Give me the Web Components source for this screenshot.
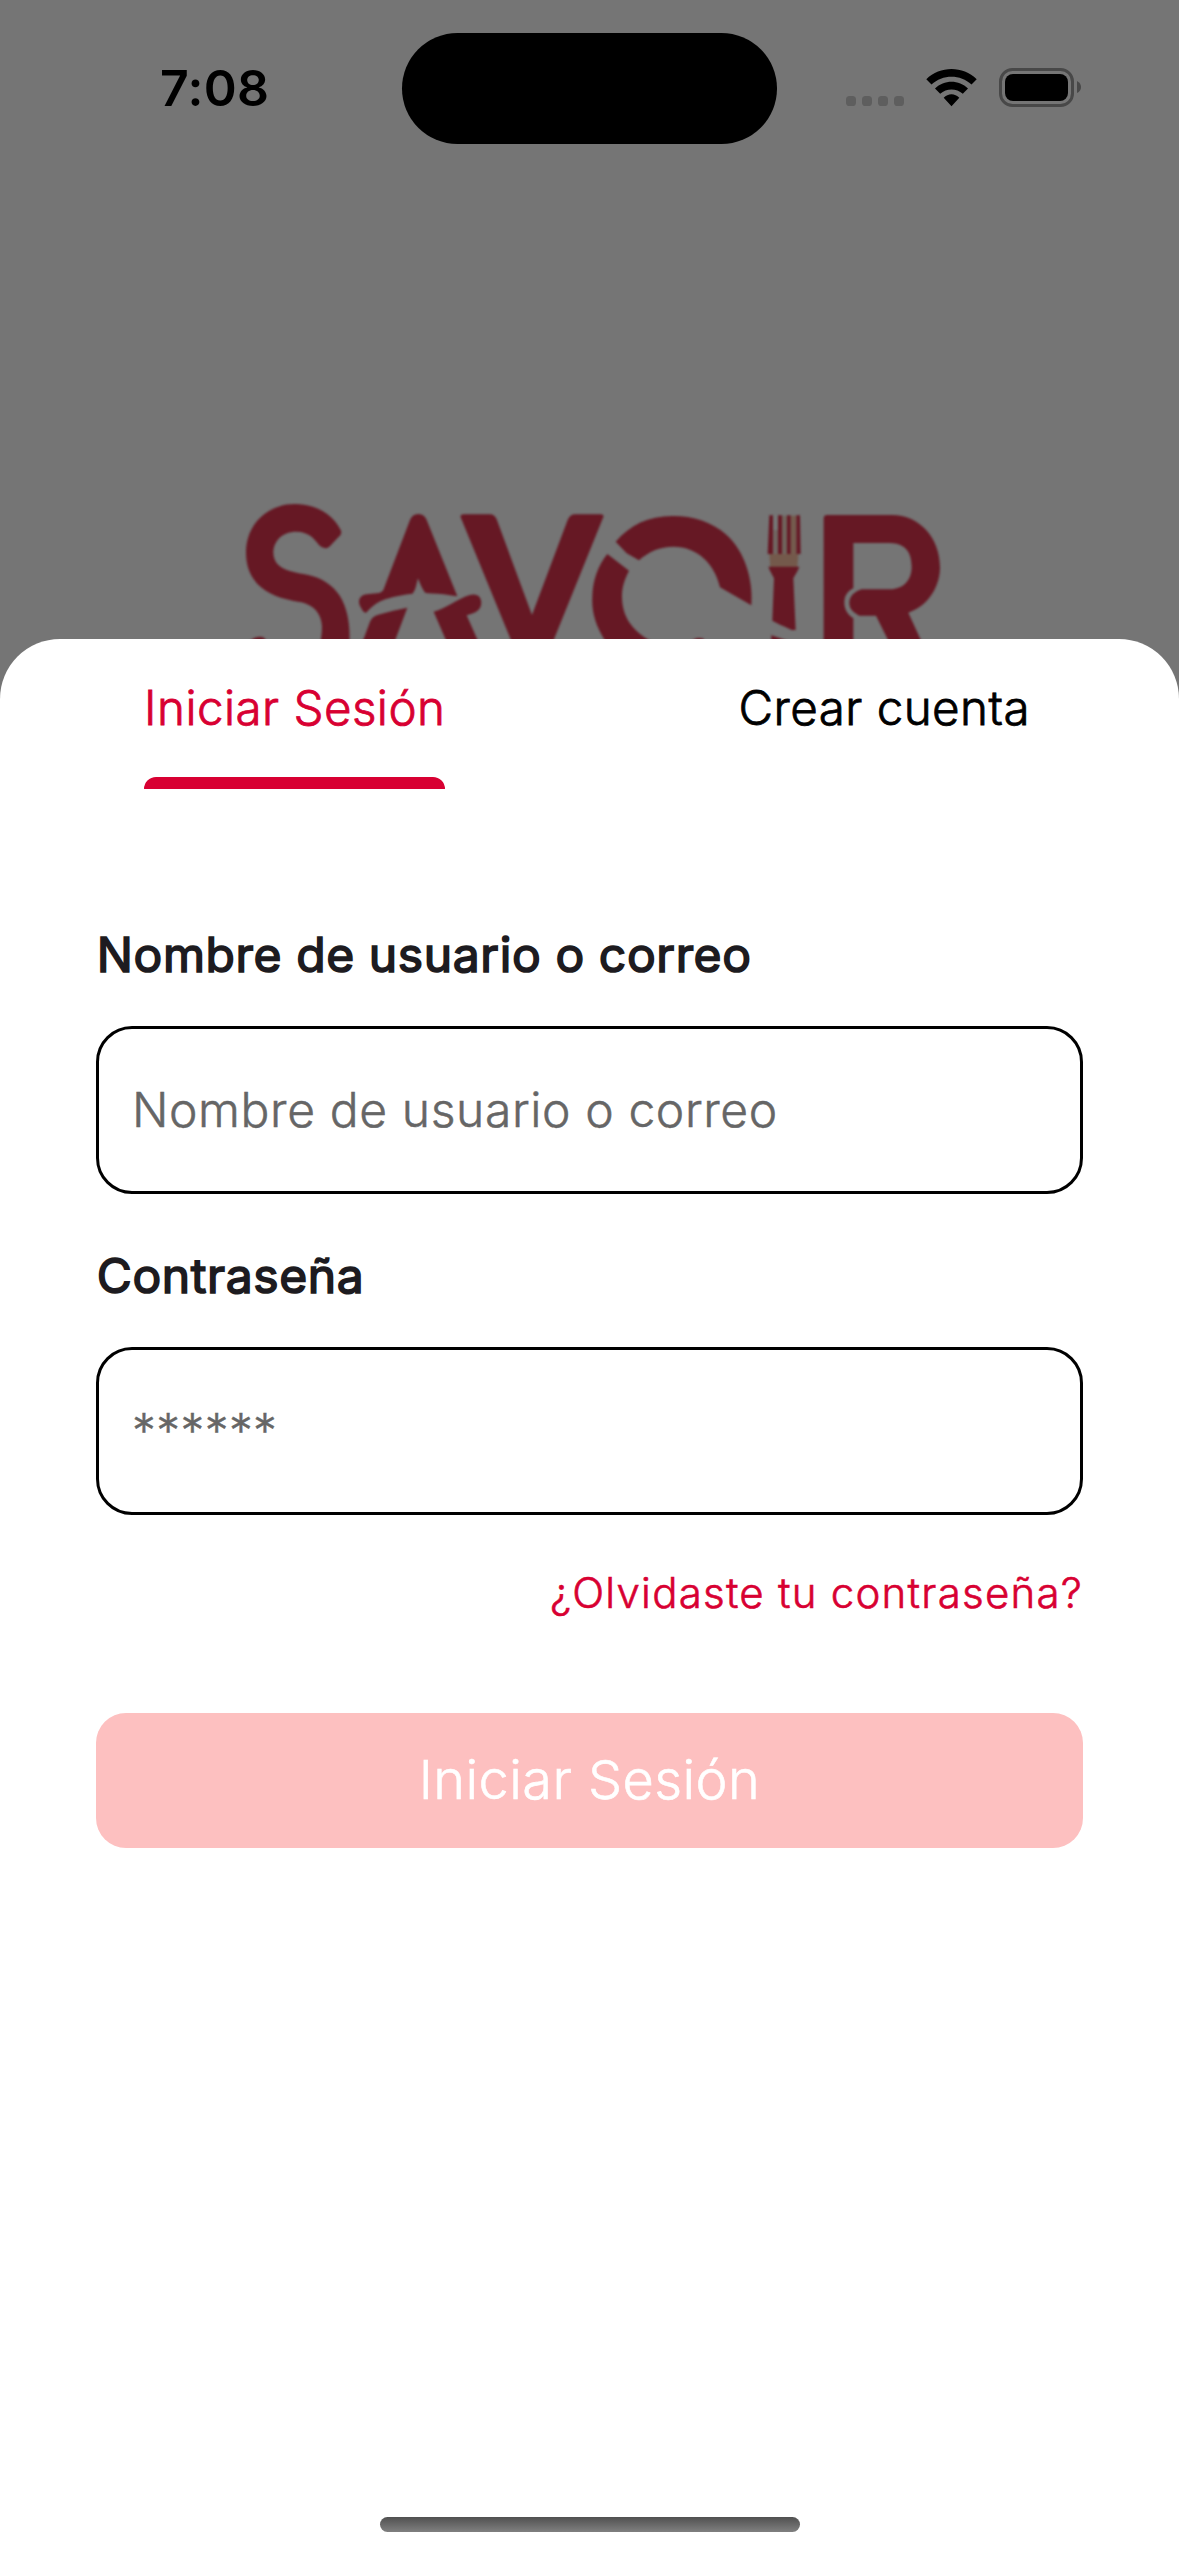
<!DOCTYPE html>
<html lang="es">
<head>
<meta charset="utf-8">
<title>Savoir</title>
<style>
html,body{margin:0;padding:0;background:#fff}
body{font-family:Inter,"Liberation Sans",sans-serif;width:1179px;height:2556px;overflow:hidden}
</style>
</head>
<body>
<savoir-screen></savoir-screen>

<script>
const define = (name, html) => customElements.define(name, class extends HTMLElement {
  constructor() {
    super();
    const t = document.createElement('template');
    t.innerHTML = html;
    this.attachShadow({ mode: 'open' }).append(t.content.cloneNode(true));
  }
});

define('status-bar', `
<style>
:host{display:flex;height:178px;align-items:flex-start;color:#000}
.time{flex:0 0 402px;padding-left:160px;box-sizing:border-box;font-size:50px;font-weight:600;line-height:60px;padding-top:58px;letter-spacing:.3px}
.island{flex:0 0 375px;height:111px;margin-top:33.4px;margin-right:1px;border-radius:56px;background:#000}
.icons{display:flex;padding-left:68px;padding-top:68px}
svg{display:block}
</style>
<div class="time">7:08</div>
<div class="island"></div>
<div class="icons">
<svg width="240" height="40" viewBox="846 68 240 40">
<g fill="#5e5e5e"><rect x="846" y="96" width="10" height="10" rx="3.6"/><rect x="862" y="96" width="10" height="10" rx="3.6"/><rect x="878" y="96" width="10" height="10" rx="3.6"/><rect x="894" y="96" width="10" height="10" rx="3.6"/></g>
<path d="M926.3 79.3C940 65.6 963 65.6 976.7 79.3L971.5 84.5C960.5 74 942.500 74 931.500 84.500ZM935 88.600C944 79.600 959 79.600 968 88.600L962.800 93.800C956.500 88 946.500 88 940.200 93.800ZM943.700 97.800C948 93 955 93 959.300 97.800L951.500 106.200Z"/>
<rect x="1000.500" y="69.500" width="72" height="36" rx="12" fill="none" stroke="#484848" stroke-width="3"/>
<rect x="1005" y="74" width="63" height="27" rx="8"/>
<path d="M1077 81Q1081 83 1081 87Q1081 91 1077 93Z" fill="#484848"/>
</svg>
</div>`);

define('savoir-logo', `
<style>:host{display:block;width:740px;height:159px}svg{display:block;filter:blur(.8px)}</style>
<svg width="740" height="175" viewBox="230 480 740 175" fill="#661824">
<g transform="translate(220 480) scale(.33333)">
<path d="M362 150C340 105 290 72 225 72C140 72 78 135 78 218C78 300 130 340 200 358C225 365 245 366 258 371C290 382 305 410 306 440C306 455 304 470 301 490L388 490C392 430 380 370 350 335C325 305 290 288 250 282C195 272 160 260 160 215C162 180 190 155 228 155C270 155 285 180 297 195Q313 212 328 200L355 172Q368 162 362 150Z"/>
<path d="M80 490Q110 462 132 473L145 490Z"/>
<path d="M570 120Q577 102 595 102Q613 102 620 120L712 349L690 346C665 341 640 341 617 339C607 330 600 310 594 295C588 315 588 330 577 341C540 345 510 352 490 360C465 370 450 385 440 397Q432 402 424 385C410 365 418 345 440 343L470 340Q485 338 490 330Z"/>
<path d="M562 383L522 490L426 490L450 425Q457 408 475 404C505 395 535 388 562 383Z"/>
<path d="M641 395C670 390 715 355 750 345C775 338 787 355 783 375C780 390 770 398 740 406L777 490L682 490Z"/>
<path d="M722 112Q720 103 732 103L810 103Q823 103 830 118L936 405L1043 120Q1050 103 1065 103L1142 103Q1153 103 1150 111L997 490L877 490Z"/>
</g>
<g transform="translate(580 480) scale(.33333)">
<path d="M107 185L140 220L177 241C205 215 240 200 280 200C355 200 405 255 420 322L514 376C520 300 495 215 440 165C395 125 340 108 278 108C205 108 150 135 107 185Z"/>
<path d="M82 222L147 272C130 305 125 330 126 355C128 410 155 455 225 490L80 490C45 435 35 395 37 350C38 300 55 255 82 222ZM330 490Q345 468 370 476L378 490Z"/>
<path d="M568 222L655 222L652 262L571 262Z" fill="#74594b"/>
<path d="M606 107H622V222H606Z" fill="#70625b"/><path d="M580 150H596V222H580Z" fill="#706560"/><path d="M632 107H648V222H632Z" fill="#745b4d"/>
<path d="M568 106H579V222H563ZM594 106H606V222H594ZM621 106H632V222H621ZM649 106H660L662 222H649Z"/>
<path d="M565 260L658 260L653 272L640 295L647 450L635 450C615 440 590 430 577 422L582 295L570 272ZM574 466L622 482L622 490L574 490Z"/>
<path d="M731 115Q731 105 742 105L935 105C1020 105 1080 175 1080 262C1080 325 1040 380 985 398L1027 490L929 490L888 407L838 407C825 400 808 390 808 370C808 350 822 335 845 328L930 328C970 328 995 300 995 262C995 215 975 190 930 189L820 189L820 325C800 335 793 350 793 368C793 390 805 405 820 415L820 490L731 490Z"/>
</g>
</svg>`);

define('tab-item', `
<style>
:host{display:flex;flex-direction:column;height:150px;color:#000}
:host([active]){color:#d80032}
.t{font-size:47.5px;font-weight:300;-webkit-text-stroke:.8px currentColor;line-height:56px;padding-top:41px;white-space:nowrap;letter-spacing:.46px}
.bar{height:12px;margin-top:41px;border-radius:12px 12px 0 0}
:host([active]) .bar{background:#d80032}
</style>
<div class="t"><slot></slot></div><div class="bar"></div>`);

define('tab-row', `
<style>:host{display:flex}.c{flex:1 1 0;display:flex;justify-content:center}</style>
<div class="c"><slot name="a"></slot></div><div class="c"><slot name="b"></slot></div>`);

define('text-field', `
<style>
:host{display:block;color:#666}
.label{color:#1d1b20;font-size:48px;line-height:58px;letter-spacing:.6px;-webkit-text-stroke:1.6px #1d1b20;padding-left:.8px;white-space:nowrap}
.box{display:flex;align-items:center;height:168px;margin-top:42px;box-sizing:border-box;border:3px solid #000;border-radius:36px;padding:0 33px;font-size:48px;font-weight:300;-webkit-text-stroke:.5px currentColor;line-height:58px;letter-spacing:.61px;white-space:nowrap}
</style>
<div class="label"><slot name="label"></slot></div>
<div class="box"><slot></slot></div>`);

define('text-link', `
<style>:host{display:flex;justify-content:flex-end;color:#d80032;font-size:42px;font-weight:300;-webkit-text-stroke:.6px currentColor;line-height:50px;letter-spacing:1.24px;white-space:nowrap}</style>
<slot></slot>`);

define('primary-button', `
<style>:host{display:flex;align-items:center;justify-content:center;height:134px;padding-bottom:1px;border-radius:30px;background:#fdc0c0;color:#fff;font-size:54px;font-weight:300;-webkit-text-stroke:.6px currentColor;line-height:64px;letter-spacing:.45px;white-space:nowrap}</style>
<span><slot></slot></span>`);

define('bottom-sheet', `
<style>
:host{display:flex;flex-direction:column;flex:1;background:#fff;border-radius:60px 60px 0 0}
.body{flex:1}
.home{width:420px;height:15px;margin:0 auto 24px;border-radius:8px;background:linear-gradient(#505050,#808080)}
</style>
<slot name="tabs"></slot>
<div class="body"><slot></slot></div>
<div class="home"></div>`);

define('login-form', `
<style>
:host{display:flex;flex-direction:column;padding:137px 96px 0}
.second{margin-top:53px}
.mask{font-size:47.5px;letter-spacing:.45px}
text-link{margin-top:53px}
primary-button{margin-top:95px}
</style>
<text-field><span slot="label">Nombre de usuario o correo</span><span>Nombre de usuario o correo</span></text-field>
<text-field class="second"><span slot="label">Contraseña</span><span class="mask">******</span></text-field>
<text-link>¿Olvidaste tu contraseña?</text-link>
<primary-button>Iniciar Sesión</primary-button>`);

define('savoir-screen', `
<style>
:host{display:flex;flex-direction:column;width:1179px;height:2556px;background:#757575}
.hero{height:639px;overflow:hidden;display:flex;flex-direction:column}
savoir-logo{margin:302px 0 0 230px}
bottom-sheet{min-height:0}
</style>
<div class="hero"><status-bar></status-bar><savoir-logo></savoir-logo></div>
<bottom-sheet>
<tab-row slot="tabs"><tab-item slot="a" active>Iniciar Sesión</tab-item><tab-item slot="b">Crear cuenta</tab-item></tab-row>
<login-form></login-form>
</bottom-sheet>`);
</script>
</body>
</html>
